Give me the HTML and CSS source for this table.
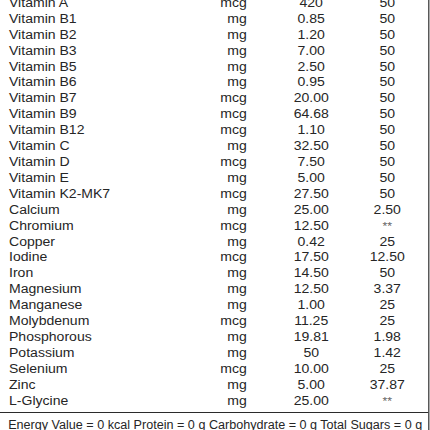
FILE: index.html
```html
<!DOCTYPE html>
<html>
<head>
<meta charset="utf-8">
<link rel="stylesheet" href="styles.css">
</head>
<body>
<div class="panel">
  <div class="table">
    <div class="row"><span class="name">Vitamin A</span><span class="unit">mcg</span><span class="val">420</span><span class="pct">50</span></div>
    <div class="row"><span class="name">Vitamin B1</span><span class="unit">mg</span><span class="val">0.85</span><span class="pct">50</span></div>
    <div class="row"><span class="name">Vitamin B2</span><span class="unit">mg</span><span class="val">1.20</span><span class="pct">50</span></div>
    <div class="row"><span class="name">Vitamin B3</span><span class="unit">mg</span><span class="val">7.00</span><span class="pct">50</span></div>
    <div class="row"><span class="name">Vitamin B5</span><span class="unit">mg</span><span class="val">2.50</span><span class="pct">50</span></div>
    <div class="row"><span class="name">Vitamin B6</span><span class="unit">mg</span><span class="val">0.95</span><span class="pct">50</span></div>
    <div class="row"><span class="name">Vitamin B7</span><span class="unit">mcg</span><span class="val">20.00</span><span class="pct">50</span></div>
    <div class="row"><span class="name">Vitamin B9</span><span class="unit">mcg</span><span class="val">64.68</span><span class="pct">50</span></div>
    <div class="row"><span class="name">Vitamin B12</span><span class="unit">mcg</span><span class="val">1.10</span><span class="pct">50</span></div>
    <div class="row"><span class="name">Vitamin C</span><span class="unit">mg</span><span class="val">32.50</span><span class="pct">50</span></div>
    <div class="row"><span class="name">Vitamin D</span><span class="unit">mcg</span><span class="val">7.50</span><span class="pct">50</span></div>
    <div class="row"><span class="name">Vitamin E</span><span class="unit">mg</span><span class="val">5.00</span><span class="pct">50</span></div>
    <div class="row"><span class="name">Vitamin K2-MK7</span><span class="unit">mcg</span><span class="val">27.50</span><span class="pct">50</span></div>
    <div class="row"><span class="name">Calcium</span><span class="unit">mg</span><span class="val">25.00</span><span class="pct">2.50</span></div>
    <div class="row"><span class="name">Chromium</span><span class="unit">mcg</span><span class="val">12.50</span><span class="pct"><span class="star">**</span></span></div>
    <div class="row"><span class="name">Copper</span><span class="unit">mg</span><span class="val">0.42</span><span class="pct">25</span></div>
    <div class="row"><span class="name">Iodine</span><span class="unit">mcg</span><span class="val">17.50</span><span class="pct">12.50</span></div>
    <div class="row"><span class="name">Iron</span><span class="unit">mg</span><span class="val">14.50</span><span class="pct">50</span></div>
    <div class="row"><span class="name">Magnesium</span><span class="unit">mg</span><span class="val">12.50</span><span class="pct">3.37</span></div>
    <div class="row"><span class="name">Manganese</span><span class="unit">mg</span><span class="val">1.00</span><span class="pct">25</span></div>
    <div class="row"><span class="name">Molybdenum</span><span class="unit">mcg</span><span class="val">11.25</span><span class="pct">25</span></div>
    <div class="row"><span class="name">Phosphorous</span><span class="unit">mg</span><span class="val">19.81</span><span class="pct">1.98</span></div>
    <div class="row"><span class="name">Potassium</span><span class="unit">mg</span><span class="val">50</span><span class="pct">1.42</span></div>
    <div class="row"><span class="name">Selenium</span><span class="unit">mcg</span><span class="val">10.00</span><span class="pct">25</span></div>
    <div class="row"><span class="name">Zinc</span><span class="unit">mg</span><span class="val">5.00</span><span class="pct">37.87</span></div>
    <div class="row"><span class="name">L-Glycine</span><span class="unit">mg</span><span class="val">25.00</span><span class="pct"><span class="star">**</span></span></div>
  </div>
  <div class="footer"><span class="footer-text">Energy Value = 0 kcal Protein = 0 g Carbohydrate = 0 g Total Sugars = 0 g</span></div>
</div>
</body>
</html>
```

FILE: styles.css
```css
html, body {
  margin: 0;
  padding: 0;
  background: #ffffff;
  overflow: hidden;
}

.panel {
  width: 366.7px;
  box-sizing: border-box;
  border-right: 1.3px solid #2b2b2b;
  margin-top: -4.1px;
  transform: scaleX(1.17);
  transform-origin: 0 0;
  font-family: "Liberation Sans", Arial, Helvetica, sans-serif;
  font-size: 12px;
  line-height: 15.9px;
  color: #262626;
}

.table {
  padding-bottom: 2.4px;
  border-bottom: 1.5px solid #2b2b2b;
}

.row {
  display: grid;
  grid-template-columns: 140px 63.3px 100px 40px;
  padding-left: 7.7px;
}

.unit {
  text-align: right;
}

.val {
  text-align: center;
  padding-left: 10px;
}

.pct {
  text-align: center;
}

.star {
  font-size: 10.5px;
  line-height: 1;
  color: #666;
}

.footer {
  padding: 5px 0 0 7px;
  white-space: nowrap;
}

.footer-text {
  display: inline-block;
  transform: scaleX(0.897);
  transform-origin: 0 0;
}
```
